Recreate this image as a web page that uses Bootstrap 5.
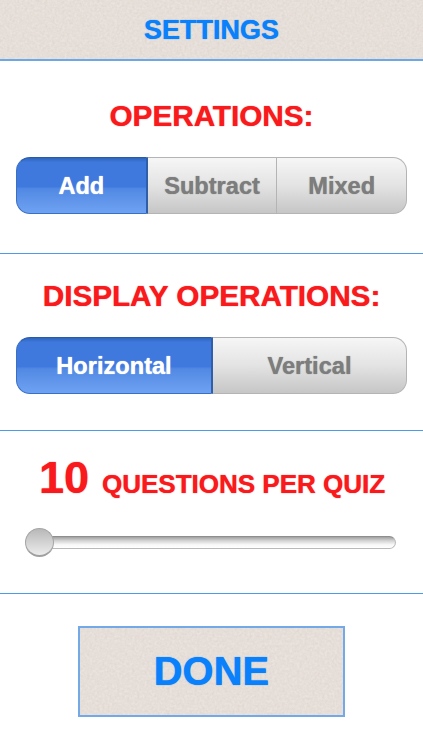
<!DOCTYPE html>
<html lang="en">
<head>
<meta charset="utf-8">
<title>Settings</title>
<link href="https://cdn.jsdelivr.net/npm/bootstrap@5.3.0/dist/css/bootstrap.min.css" rel="stylesheet">
<style>
html, body { height: 750px; overflow: hidden; }
body { background: #fff; font-family: "Liberation Sans", Arial, sans-serif; font-weight: 700; }
.paper {
  background-color: #e9e2dd;
  background-image: url("data:image/svg+xml,%3Csvg xmlns='http://www.w3.org/2000/svg' width='300' height='300'%3E%3Cfilter id='n'%3E%3CfeTurbulence type='fractalNoise' baseFrequency='0.4' numOctaves='3' seed='4'/%3E%3CfeColorMatrix values='0 0 0 0 0.62 0 0 0 0 0.54 0 0 0 0 0.47 0.4 0.4 0 0 -0.27'/%3E%3C/filter%3E%3Crect width='300' height='300' filter='url(%23n)'/%3E%3C/svg%3E");
}
.soft { text-shadow: 0 0 1px currentColor; }
.top-strip { height: 61px; border-bottom: 2px solid #6aa8e8; color: #0a80fa; font-size: 27px; padding-top: 1px; }
.zone { border-bottom: 1px solid #4f9ae8; padding: 0 16px; }
.zone-ops { height: 193px; padding-top: 38px; }
.zone-display { height: 177px; padding-top: 25px; }
.zone-count { height: 163px; padding-top: 21px; }
.zone-title { color: #f81a1c; font-size: 29.7px; line-height: 34px; margin: 0; font-weight: 700; text-align: center; }
.zone-ops .zone-title { margin-bottom: 24px; }
.zone-display .zone-title { margin-bottom: 24px; }
.seg { width: 100%; height: 57px; display: flex; }
.seg .btn {
  font-size: 23.6px; font-weight: 700; padding: 2px 0 0; border-radius: 0; flex: 1 1 0;
  color: #7d7d7d; border: 1px solid #b4b4b4; border-left: 0;
  background: linear-gradient(#f6f6f6 0%, #e4e4e4 48%, #c6c6c6 100%);
}
.seg .btn:first-child { border-radius: 14px 0 0 14px; border-left: 1px solid #3a6fc4; }
.seg .btn:last-child { border-radius: 0 14px 14px 0; }
.seg .btn.active, .seg .btn.active:hover {
  color: #fff; border: 1px solid #3a6fc4; border-right: 2px solid #2f5fa8; border-top-color: #2a5aa6;
  background: linear-gradient(#2f65bc 0%, #3f79de 8%, #3f79de 52%, #5189e3 56%, #6fa2f2 100%);
}
.seg-wide .btn:first-child { flex: 0 0 197px; }
.count-line { color: #f81a1c; font-size: 26px; line-height: 52px; height: 52px; justify-content: center; gap: 13px; padding-left: 1px; }
.count-num { font-size: 45px; }
.slider { height: 30px; margin: 23px 11px 0 9px; }
.slider-track {
  flex: 1; height: 13px; border-radius: 7px; border: 1px solid #b9b9b9; border-top-color: #8e8e8e; margin-left: -8px;
  background: linear-gradient(#a0a0a0 0%, #d4d4d4 35%, #f8f8f8 70%, #fff 100%);
}
.slider-knob {
  width: 29px; height: 29px; border-radius: 50%; flex: none; position: relative; z-index: 1;
  border: 1px solid #a5a5a5; border-bottom: 2px solid #a0a0a0;
  background: linear-gradient(#b8b8b8 0%, #d2d2d2 50%, #ececec 100%);
}
.finish {
  display: block; width: 267px; height: 91px; margin: 32px auto 0; padding: 0; border-radius: 0;
  border: 2px solid #74a9e8; color: #0a80fa; font-size: 40px; font-weight: 700; line-height: 85px;
}
.finish:hover { color: #0a80fa; border-color: #74a9e8; }
</style>
</head>
<body>
<header class="top-strip paper d-flex align-items-center justify-content-center soft">SETTINGS</header>
<section class="zone zone-ops">
  <h2 class="zone-title soft">OPERATIONS:</h2>
  <div class="seg" role="group">
    <button class="btn active soft" type="button">Add</button>
    <button class="btn soft" type="button">Subtract</button>
    <button class="btn soft" type="button">Mixed</button>
  </div>
</section>
<section class="zone zone-display">
  <h2 class="zone-title soft">DISPLAY OPERATIONS:</h2>
  <div class="seg seg-wide" role="group">
    <button class="btn active soft" type="button">Horizontal</button>
    <button class="btn soft" type="button">Vertical</button>
  </div>
</section>
<section class="zone zone-count">
  <div class="count-line d-flex align-items-baseline soft"><span class="count-num">10</span><span>QUESTIONS PER QUIZ</span></div>
  <div class="slider d-flex align-items-center">
    <div class="slider-knob"></div>
    <div class="slider-track"></div>
  </div>
</section>
<button class="btn finish paper soft" type="button">DONE</button>
<script src="https://cdn.jsdelivr.net/npm/bootstrap@5.3.0/dist/js/bootstrap.bundle.min.js"></script>
</body>
</html>
